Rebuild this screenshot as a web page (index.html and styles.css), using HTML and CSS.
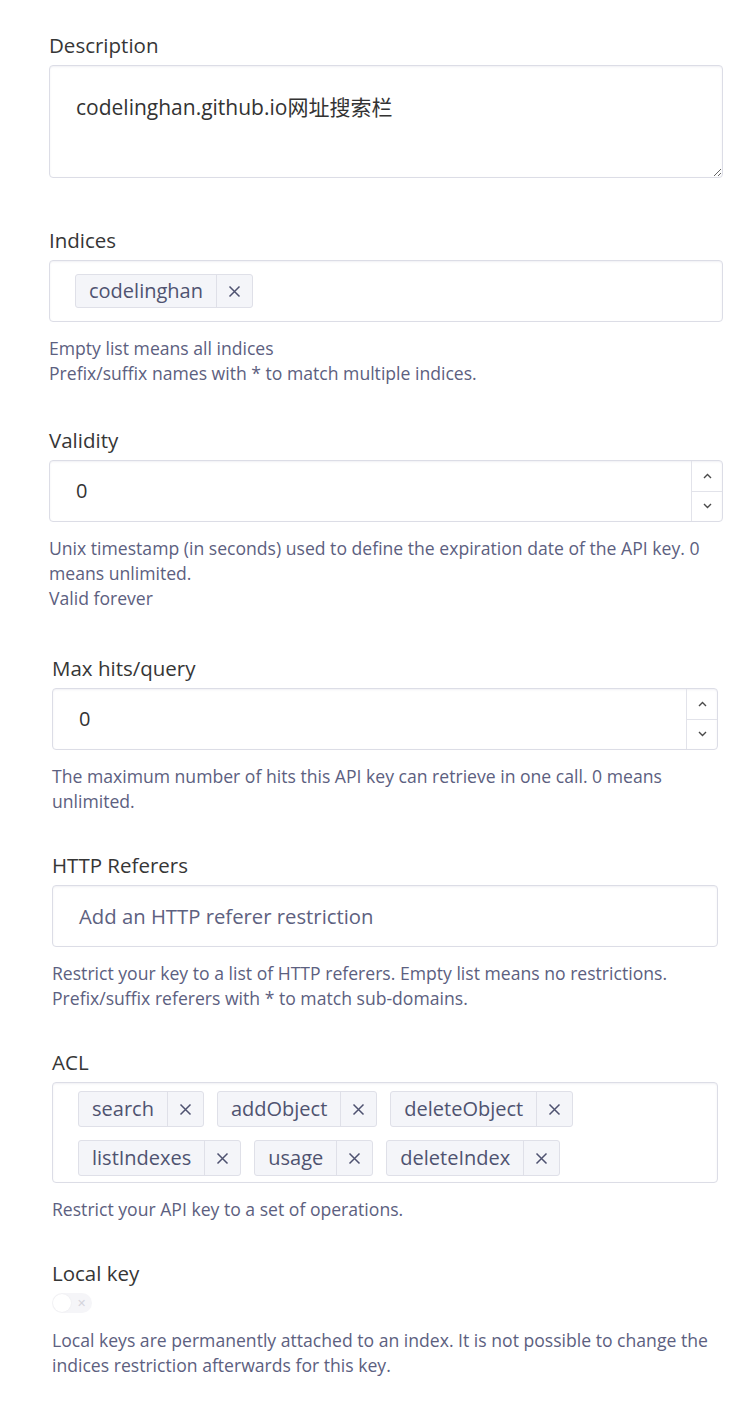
FILE: index.html
```html
<!DOCTYPE html>
<html lang="en">
<head>
<meta charset="utf-8">
<title>API key form</title>
<link rel="stylesheet" href="styles.css">
</head>
<body>
<div class="page">
  <div class="group-a">
    <div class="field field-desc">
      <div class="label">Description</div>
      <textarea class="textarea" readonly>codelinghan.github.io网址搜索栏</textarea>
    </div>

    <div class="field">
      <div class="label">Indices</div>
      <div class="box tagbox tagbox-single">
        <span class="tag tag-sm"><span class="tag-text">codelinghan</span><span class="tag-x"><svg width="13" height="13" viewBox="0 0 13 13"><path d="M1.5 1.5 L11.5 11.5 M11.5 1.5 L1.5 11.5" stroke="#4e5270" stroke-width="1.5" fill="none"/></svg></span></span>
      </div>
      <div class="help">Empty list means all indices<br>Prefix/suffix names with * to match multiple indices.</div>
    </div>

    <div class="field field-wide">
      <div class="label">Validity</div>
      <div class="box number">
        <span class="value">0</span>
        <span class="spinner">
          <span class="spin-btn"><svg width="9" height="6" viewBox="0 0 9 6"><path d="M1 5 L4.5 1.5 L8 5" fill="none" stroke="#4a4a4a" stroke-width="1.4"/></svg></span>
          <span class="spin-btn"><svg width="9" height="6" viewBox="0 0 9 6"><path d="M1 1 L4.5 4.5 L8 1" fill="none" stroke="#4a4a4a" stroke-width="1.4"/></svg></span>
        </span>
      </div>
      <div class="help">Unix timestamp (in seconds) used to define the expiration date of the API key. 0 means unlimited.<br>Valid forever</div>
    </div>
  </div>

  <div class="group-b">
    <div class="field field-tight">
      <div class="label">Max hits/query</div>
      <div class="box number">
        <span class="value">0</span>
        <span class="spinner">
          <span class="spin-btn"><svg width="9" height="6" viewBox="0 0 9 6"><path d="M1 5 L4.5 1.5 L8 5" fill="none" stroke="#4a4a4a" stroke-width="1.4"/></svg></span>
          <span class="spin-btn"><svg width="9" height="6" viewBox="0 0 9 6"><path d="M1 1 L4.5 4.5 L8 1" fill="none" stroke="#4a4a4a" stroke-width="1.4"/></svg></span>
        </span>
      </div>
      <div class="help">The maximum number of hits this API key can retrieve in one call. 0 means unlimited.</div>
    </div>

    <div class="field field-tight">
      <div class="label">HTTP Referers</div>
      <div class="box text-input">
        <span class="placeholder">Add an HTTP referer restriction</span>
      </div>
      <div class="help">Restrict your key to a list of HTTP referers. Empty list means no restrictions.<br>Prefix/suffix referers with * to match sub-domains.</div>
    </div>

    <div class="field field-tight">
      <div class="label">ACL</div>
      <div class="box tagbox tagbox-multi">
        <span class="tag"><span class="tag-text">search</span><span class="tag-x"><svg width="13" height="13" viewBox="0 0 13 13"><path d="M1.5 1.5 L11.5 11.5 M11.5 1.5 L1.5 11.5" stroke="#4e5270" stroke-width="1.5" fill="none"/></svg></span></span>
        <span class="tag"><span class="tag-text">addObject</span><span class="tag-x"><svg width="13" height="13" viewBox="0 0 13 13"><path d="M1.5 1.5 L11.5 11.5 M11.5 1.5 L1.5 11.5" stroke="#4e5270" stroke-width="1.5" fill="none"/></svg></span></span>
        <span class="tag"><span class="tag-text">deleteObject</span><span class="tag-x"><svg width="13" height="13" viewBox="0 0 13 13"><path d="M1.5 1.5 L11.5 11.5 M11.5 1.5 L1.5 11.5" stroke="#4e5270" stroke-width="1.5" fill="none"/></svg></span></span>
        <span class="tag"><span class="tag-text">listIndexes</span><span class="tag-x"><svg width="13" height="13" viewBox="0 0 13 13"><path d="M1.5 1.5 L11.5 11.5 M11.5 1.5 L1.5 11.5" stroke="#4e5270" stroke-width="1.5" fill="none"/></svg></span></span>
        <span class="tag"><span class="tag-text">usage</span><span class="tag-x"><svg width="13" height="13" viewBox="0 0 13 13"><path d="M1.5 1.5 L11.5 11.5 M11.5 1.5 L1.5 11.5" stroke="#4e5270" stroke-width="1.5" fill="none"/></svg></span></span>
        <span class="tag"><span class="tag-text">deleteIndex</span><span class="tag-x"><svg width="13" height="13" viewBox="0 0 13 13"><path d="M1.5 1.5 L11.5 11.5 M11.5 1.5 L1.5 11.5" stroke="#4e5270" stroke-width="1.5" fill="none"/></svg></span></span>
      </div>
      <div class="help">Restrict your API key to a set of operations.</div>
    </div>

    <div class="field field-last">
      <div class="label">Local key</div>
      <div class="toggle"><span class="knob"></span><span class="toggle-x">✕</span></div>
      <div class="help">Local keys are permanently attached to an index. It is not possible to change the indices restriction afterwards for this key.</div>
    </div>
  </div>
</div>
</body>
</html>
```

FILE: styles.css
```css
html, body {
  margin: 0;
  padding: 0;
  background: #ffffff;
}

body {
  font-family: "Open Sans", "Noto Sans", "Noto Sans CJK SC", sans-serif;
  color: #3a3a3a;
}

.page {
  padding-top: 31px;
}

.group-a {
  margin-left: 49px;
  width: 674px;
}

.group-b {
  margin-left: 52px;
  width: 666px;
}

.field {
  margin-bottom: 40px;
}

.field-desc {
  margin-bottom: 48px;
}

.field-wide {
  margin-bottom: 43px;
}

.field-tight {
  margin-bottom: 37px;
}

.label {
  font-size: 20.5px;
  line-height: 28px;
  margin-bottom: 6px;
  color: #363636;
}

.box {
  box-sizing: border-box;
  border: 1px solid #dcdde6;
  border-radius: 4px;
  background: #fff;
  box-shadow: inset 0 1px 2px rgba(60, 65, 110, 0.08);
}

.textarea {
  display: block;
  box-sizing: border-box;
  width: 100%;
  height: 113px;
  margin: 0;
  padding: 27px 26px;
  border: 1px solid #dcdde6;
  border-radius: 4px;
  box-shadow: inset 0 1px 2px rgba(60, 65, 110, 0.08);
  font-family: "Open Sans", "Noto Sans CJK SC", sans-serif;
  font-size: 21px;
  line-height: 28px;
  color: #333;
  resize: vertical;
  outline: none;
}

.tagbox-single {
  height: 62px;
  padding: 0 25px;
  display: flex;
  align-items: center;
}

.tagbox-multi {
  padding: 8px 25px 6px;
  display: flex;
  flex-wrap: wrap;
  column-gap: 13px;
  row-gap: 13px;
}

.tag {
  display: inline-flex;
  align-items: stretch;
  height: 36px;
  box-sizing: border-box;
  border: 1px solid #dfe0e8;
  border-radius: 3px;
  background: #f4f5f9;
  color: #4f5370;
  font-size: 20px;
  line-height: 34px;
}

.tag-sm {
  height: 34px;
  line-height: 32px;
}

.tag-text {
  padding: 0 13px 0 13px;
}

.tag-x {
  width: 35px;
  display: flex;
  align-items: center;
  justify-content: center;
  border-left: 1px solid #dfe0e8;
}

.number {
  height: 62px;
  display: flex;
  align-items: stretch;
}

.value {
  flex: 1;
  padding-left: 26px;
  font-size: 20px;
  line-height: 60px;
  color: #333;
}

.spinner {
  width: 30px;
  display: flex;
  flex-direction: column;
  border-left: 1px solid #e2e3ea;
}

.spin-btn {
  flex: 1;
  display: flex;
  align-items: center;
  justify-content: center;
}

.spin-btn + .spin-btn {
  border-top: 1px solid #e2e3ea;
}

.text-input {
  height: 62px;
  display: flex;
  align-items: center;
  padding-left: 26px;
}

.placeholder {
  font-size: 20.3px;
  color: #5d6180;
}

.help {
  margin-top: 14px;
  font-size: 17.6px;
  line-height: 25px;
  color: #5c6080;
}

.toggle {
  position: relative;
  width: 40px;
  height: 20px;
  margin-top: 3px;
  border-radius: 10px;
  background: #f5f5f8;
}

.knob {
  position: absolute;
  left: 1px;
  top: 1px;
  width: 18px;
  height: 18px;
  border-radius: 50%;
  background: #fff;
  box-shadow: 0 0 2px rgba(0, 0, 0, 0.06);
}

.toggle-x {
  position: absolute;
  right: 6px;
  top: 0;
  font-size: 11px;
  line-height: 20px;
  color: #d4d4dc;
}

.field-last .help {
  margin-top: 15px;
}
```
